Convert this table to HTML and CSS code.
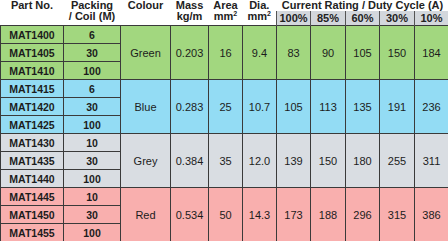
FILE: index.html
```html
<!DOCTYPE html>
<html>
<head>
<meta charset="utf-8">
<link rel="stylesheet" href="styles.css">
</head>
<body>
<table class="spec">
  <colgroup>
    <col class="c-part"><col class="c-pack"><col class="c-colour"><col class="c-mass"><col class="c-area"><col class="c-dia">
    <col class="c-pct"><col class="c-pct2"><col class="c-pct"><col class="c-pct2"><col class="c-pct">
  </colgroup>
  <thead>
    <tr class="h1">
      <th rowspan="2">Part No.</th>
      <th rowspan="2">Packing<br>/ Coil (M)</th>
      <th rowspan="2">Colour</th>
      <th rowspan="2">Mass<br>kg/m</th>
      <th rowspan="2">Area<br>mm<sup>2</sup></th>
      <th rowspan="2">Dia.<br>mm<sup>2</sup></th>
      <th colspan="5" class="cr">Current Rating / Duty Cycle (A)</th>
    </tr>
    <tr class="h2">
      <th class="pct">100%</th><th class="pct">85%</th><th class="pct">60%</th><th class="pct">30%</th><th class="pct">10%</th>
    </tr>
  </thead>
  <tbody class="green">
    <tr><td class="b">MAT1400</td><td class="b">6</td><td rowspan="3">Green</td><td rowspan="3">0.203</td><td rowspan="3">16</td><td rowspan="3">9.4</td><td rowspan="3">83</td><td rowspan="3">90</td><td rowspan="3">105</td><td rowspan="3">150</td><td rowspan="3">184</td></tr>
    <tr><td class="b">MAT1405</td><td class="b">30</td></tr>
    <tr><td class="b">MAT1410</td><td class="b">100</td></tr>
  </tbody>
  <tbody class="blue">
    <tr><td class="b">MAT1415</td><td class="b">6</td><td rowspan="3">Blue</td><td rowspan="3">0.283</td><td rowspan="3">25</td><td rowspan="3">10.7</td><td rowspan="3">105</td><td rowspan="3">113</td><td rowspan="3">135</td><td rowspan="3">191</td><td rowspan="3">236</td></tr>
    <tr><td class="b">MAT1420</td><td class="b">30</td></tr>
    <tr><td class="b">MAT1425</td><td class="b">100</td></tr>
  </tbody>
  <tbody class="grey">
    <tr><td class="b">MAT1430</td><td class="b">10</td><td rowspan="3">Grey</td><td rowspan="3">0.384</td><td rowspan="3">35</td><td rowspan="3">12.0</td><td rowspan="3">139</td><td rowspan="3">150</td><td rowspan="3">180</td><td rowspan="3">255</td><td rowspan="3">311</td></tr>
    <tr><td class="b">MAT1435</td><td class="b">30</td></tr>
    <tr><td class="b">MAT1440</td><td class="b">100</td></tr>
  </tbody>
  <tbody class="red">
    <tr><td class="b">MAT1445</td><td class="b">10</td><td rowspan="3">Red</td><td rowspan="3">0.534</td><td rowspan="3">50</td><td rowspan="3">14.3</td><td rowspan="3">173</td><td rowspan="3">188</td><td rowspan="3">296</td><td rowspan="3">315</td><td rowspan="3">386</td></tr>
    <tr><td class="b">MAT1450</td><td class="b">30</td></tr>
    <tr><td class="b">MAT1455</td><td class="b">100</td></tr>
  </tbody>
</table>
</body>
</html>
```
FILE: styles.css
```css
html, body {
  margin: 0;
  padding: 0;
  background: #ffffff;
}

.spec {
  border-collapse: collapse;
  table-layout: fixed;
  width: 448px;
  font-family: "Liberation Sans", Arial, sans-serif;
  color: #1c1c1c;
}

.c-part { width: 63px; }
.c-pack { width: 57px; }
.c-colour { width: 50px; }
.c-mass { width: 38px; }
.c-area { width: 34px; }
.c-dia { width: 34px; }
.c-pct { width: 34px; }
.c-pct2 { width: 35px; }

th {
  font-weight: bold;
  font-size: 11px;
  line-height: 11px;
  padding: 0;
  text-align: center;
  vertical-align: top;
  color: #222;
}

th sup {
  font-size: 7px;
  line-height: 0;
  vertical-align: 4px;
}

.h1 th { height: 11px; }
.h1 th.cr { vertical-align: top; line-height: 11px; }

.h2 th.pct {
  height: 14px;
  line-height: 14px;
  background: #d3d7dc;
  border-left: 1px solid #555;
  border-right: 1px solid #555;
  vertical-align: middle;
}

td {
  font-size: 11px;
  height: 17px;
  padding: 0;
  text-align: center;
  vertical-align: middle;
  border: 1px solid #3a3a3a;
}

td.b {
  font-weight: bold;
  font-size: 10.5px;
}

.green td { background: #a2d77f; }
.blue td { background: #93dcf4; }
.grey td { background: #d9dde2; }
.red td { background: #f9afae; }
```
